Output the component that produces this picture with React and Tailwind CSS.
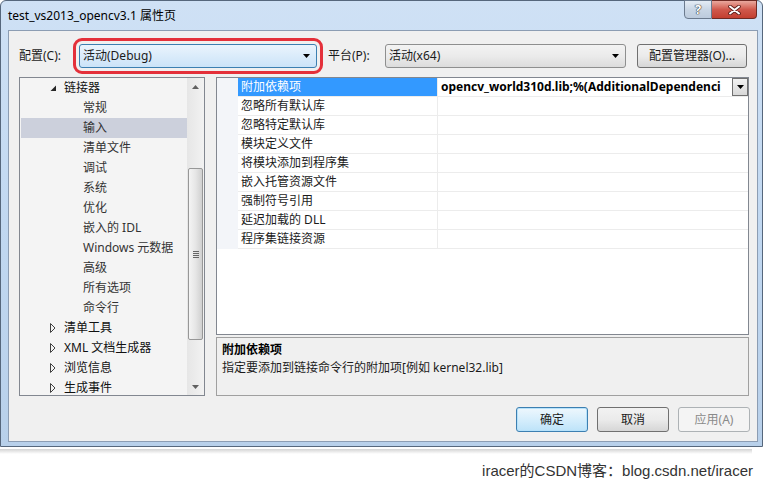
import React from "react";

const tree = [
  { t: "链接器", lvl: 0, exp: true },
  { t: "常规", lvl: 1 },
  { t: "输入", lvl: 1, sel: true },
  { t: "清单文件", lvl: 1 },
  { t: "调试", lvl: 1 },
  { t: "系统", lvl: 1 },
  { t: "优化", lvl: 1 },
  { t: "嵌入的 IDL", lvl: 1 },
  { t: "Windows 元数据", lvl: 1 },
  { t: "高级", lvl: 1 },
  { t: "所有选项", lvl: 1 },
  { t: "命令行", lvl: 1 },
  { t: "清单工具", lvl: 0 },
  { t: "XML 文档生成器", lvl: 0 },
  { t: "浏览信息", lvl: 0 },
  { t: "生成事件", lvl: 0 },
];

const props = [
  "附加依赖项",
  "忽略所有默认库",
  "忽略特定默认库",
  "模块定义文件",
  "将模块添加到程序集",
  "嵌入托管资源文件",
  "强制符号引用",
  "延迟加载的 DLL",
  "程序集链接资源",
];

function DownArrow({ className = "" }) {
  return (
    <svg width="7" height="4" viewBox="0 0 7 4" className={className}>
      <path d="M0 0H7L3.5 4Z" fill="#000" />
    </svg>
  );
}

function Expanded() {
  return (
    <svg width="7" height="7" viewBox="0 0 7 7">
      <path d="M6 0.5V6H0.5Z" fill="#262626" />
    </svg>
  );
}

function Collapsed() {
  return (
    <svg width="6" height="10" viewBox="0 0 6 10">
      <path d="M0.5 0.5L5 5L0.5 9.5Z" fill="none" stroke="#404040" strokeWidth="1" />
    </svg>
  );
}

export default function App() {
  return (
    <div className="w-[766px] h-[487px] bg-white overflow-hidden font-['Noto_Sans','Noto_Sans_CJK_SC',sans-serif] text-[12px] leading-[16px] text-[#1b1b1b]">
      {/* window */}
      <div className="w-[763px] h-[447px] flex flex-col border border-[#56677c] rounded-t-[6px] bg-gradient-to-b from-[#cfe1f5] via-[#c1d8f1] to-[#b8d0ea]">
        {/* title bar */}
        <div className="h-[29px] flex items-start shrink-0">
          <div className="pl-[7px] pt-[7px] text-[12px] leading-[16px] text-black">test_vs2013_opencv3.1 属性页</div>
          <div className="ml-auto mr-[5px] mt-[-1px] flex">
            <div className="w-[28px] h-[19px] border border-[#6b7a8e] rounded-bl-[4px] bg-gradient-to-b from-[#e4ecf5] via-[#c9d6e5] to-[#bccbdd] flex items-center justify-center">
              <span className="text-[13px] leading-[13px] font-bold text-white [text-shadow:0_0_1px_#333,0_0_1px_#333,0_0_1px_#333]">?</span>
            </div>
            <div className="w-[45px] h-[19px] border border-l-0 border-[#6e2a24] rounded-br-[4px] bg-gradient-to-b from-[#e8a89e] via-[#d0584c] to-[#c33f30] flex items-center justify-center">
              <svg width="13" height="10" viewBox="0 0 13 10">
                <path d="M2 1.5L11 8.5M11 1.5L2 8.5" stroke="#5a1d18" strokeWidth="3.6" strokeLinecap="round" />
                <path d="M2 1.5L11 8.5M11 1.5L2 8.5" stroke="#fff" strokeWidth="2" strokeLinecap="round" />
              </svg>
            </div>
          </div>
        </div>

        {/* client area */}
        <div className="ml-[7px] mr-[4px] h-[412px] border border-[#8c9db3] bg-[#f0f0f0] pl-[10px] pr-[8px] pt-[13px] flex flex-col">
          {/* config row */}
          <div className="h-[24px] flex items-center">
            <div className="w-[60px] shrink-0">配置(C):</div>
            <div className="w-[238px] shrink-0 h-[24px] rounded-[3px] border border-[#3c7fb1] bg-gradient-to-b from-[#eaf4fd] to-[#cbe3f8] flex items-center pl-[3px] pr-[6px] outline-[3px] outline-solid outline-[#e4303a] outline-offset-[3px]">
              <span>活动(Debug)</span>
              <DownArrow className="ml-auto" />
            </div>
            <div className="w-[57px] shrink-0 ml-[11px]">平台(P):</div>
            <div className="w-[241px] shrink-0 h-[24px] rounded-[3px] border border-[#8e8f8f] bg-gradient-to-b from-[#f3f3f3] via-[#ebebeb] to-[#dcdcdc] flex items-center pl-[3px] pr-[6px]">
              <span>活动(x64)</span>
              <DownArrow className="ml-auto" />
            </div>
            <div className="w-[110px] shrink-0 ml-[11px] h-[24px] rounded-[3px] border border-[#707070] bg-gradient-to-b from-[#f2f2f2] via-[#ebebeb] to-[#d6d6d6] flex items-center justify-center">
              配置管理器(O)...
            </div>
          </div>

          {/* main */}
          <div className="mt-[9px] h-[319px] flex gap-[11px]">
            {/* tree */}
            <div className="w-[186px] shrink-0 h-[319px] border border-[#828790] bg-[#f4f4f4] flex overflow-hidden">
              <div className="flex-1 flex flex-col">
                {tree.map((r, i) => (
                  <div
                    key={i}
                    className={
                      "h-[20px] shrink-0 flex items-center ml-[1px] " +
                      (r.sel ? "bg-[#ccd0dc]" : "")
                    }
                  >
                    {r.lvl === 0 ? (
                      <>
                        <div className="w-[29px]" />
                        <div className="w-[14px] flex items-center">{r.exp ? <Expanded /> : <Collapsed />}</div>
                        <span className="text-[#111]">{r.t}</span>
                      </>
                    ) : (
                      <>
                        <div className="w-[62px]" />
                        <span className="text-[#333]">{r.t}</span>
                      </>
                    )}
                  </div>
                ))}
              </div>
              {/* scrollbar */}
              <div className="w-[17px] bg-gradient-to-r from-[#e6e6e6] to-[#f2f2f2] flex flex-col items-center">
                <div className="h-[17px] w-full flex items-center justify-center">
                  <svg width="7" height="4" viewBox="0 0 7 4"><path d="M0 4H7L3.5 0Z" fill="#606060" /></svg>
                </div>
                <div className="h-[73px]" />
                <div className="h-[172px] w-[15px] rounded-[2px] border border-[#979797] bg-gradient-to-r from-[#f4f4f4] via-[#e6e6e6] to-[#d0d0d0] flex items-center justify-center">
                  <div className="flex flex-col gap-[1px]">
                    <div className="w-[6px] h-[1px] bg-[#666]" />
                    <div className="w-[6px] h-[1px] bg-[#666]" />
                    <div className="w-[6px] h-[1px] bg-[#666]" />
                    <div className="w-[6px] h-[1px] bg-[#666]" />
                  </div>
                </div>
                <div className="flex-1" />
                <div className="h-[17px] w-full flex items-center justify-center">
                  <svg width="7" height="4" viewBox="0 0 7 4"><path d="M0 0H7L3.5 4Z" fill="#606060" /></svg>
                </div>
              </div>
            </div>

            {/* right side */}
            <div className="w-[533px] shrink-0 flex flex-col gap-[2px]">
              <div className="h-[258px] border border-[#828790] bg-white flex flex-col">
                {props.map((p, i) => (
                  <div key={i} className="h-[19px] flex shrink-0">
                    <div className="w-[21px] bg-[#f3f5f9]" />
                    <div
                      className={
                        "w-[200px] border-b border-r border-[#ececec] pl-[3px] flex items-center " +
                        (i === 0 ? "bg-[#3399ff] text-white border-[#3399ff]" : "text-[#1b1b1b]")
                      }
                    >
                      {p}
                    </div>
                    <div className="flex-1 min-w-0 border-b border-[#ececec] flex items-center pl-[3px]">
                      {i === 0 && (
                        <>
                          <span className="font-bold text-black whitespace-nowrap overflow-hidden flex-1 min-w-0">
                            opencv_world310d.lib;%(AdditionalDependenci
                          </span>
                          <div className="w-[16px] h-[18px] border border-[#707070] bg-gradient-to-b from-[#f2f2f2] to-[#d8d8d8] flex items-center justify-center ml-[1px]">
                            <DownArrow />
                          </div>
                        </>
                      )}
                    </div>
                  </div>
                ))}
              </div>
              <div className="h-[59px] border border-[#a0a0a0] bg-[#f0f0f0] px-[5px] pt-[3px] leading-[18px]">
                <div className="font-bold text-black">附加依赖项</div>
                <div>指定要添加到链接命令行的附加项[例如 kernel32.lib]</div>
              </div>
            </div>
          </div>

          {/* buttons */}
          <div className="mt-[11px] h-[25px] flex justify-end gap-[9px] mr-[-1px]">
            <div className="w-[72px] h-[25px] rounded-[3px] border border-[#3c7fb1] bg-gradient-to-b from-[#eef7fd] via-[#d6eefc] to-[#bde3f9] flex items-center justify-center shadow-[inset_0_0_0_1px_#b6e2fb]">
              确定
            </div>
            <div className="w-[72px] h-[25px] rounded-[3px] border border-[#707070] bg-gradient-to-b from-[#f2f2f2] via-[#ebebeb] to-[#d6d6d6] flex items-center justify-center">
              取消
            </div>
            <div className="w-[72px] h-[25px] rounded-[3px] border border-[#adb2b5] bg-[#f4f4f4] text-[#8a8a8a] flex items-center justify-center">
              应用(A)
            </div>
          </div>
        </div>
      </div>

      {/* shadow + footer */}
      <div className="mt-[2px] w-[752px] h-[5px] bg-gradient-to-b from-[#d4d4d4] to-white" />
      <div className="mt-[8px] pr-[13px] text-right font-['Liberation_Sans','Noto_Sans_CJK_SC',sans-serif] text-[15px] leading-[18px] text-[#333]">
        iracer的CSDN博客：blog.csdn.net/iracer
      </div>
    </div>
  );
}
